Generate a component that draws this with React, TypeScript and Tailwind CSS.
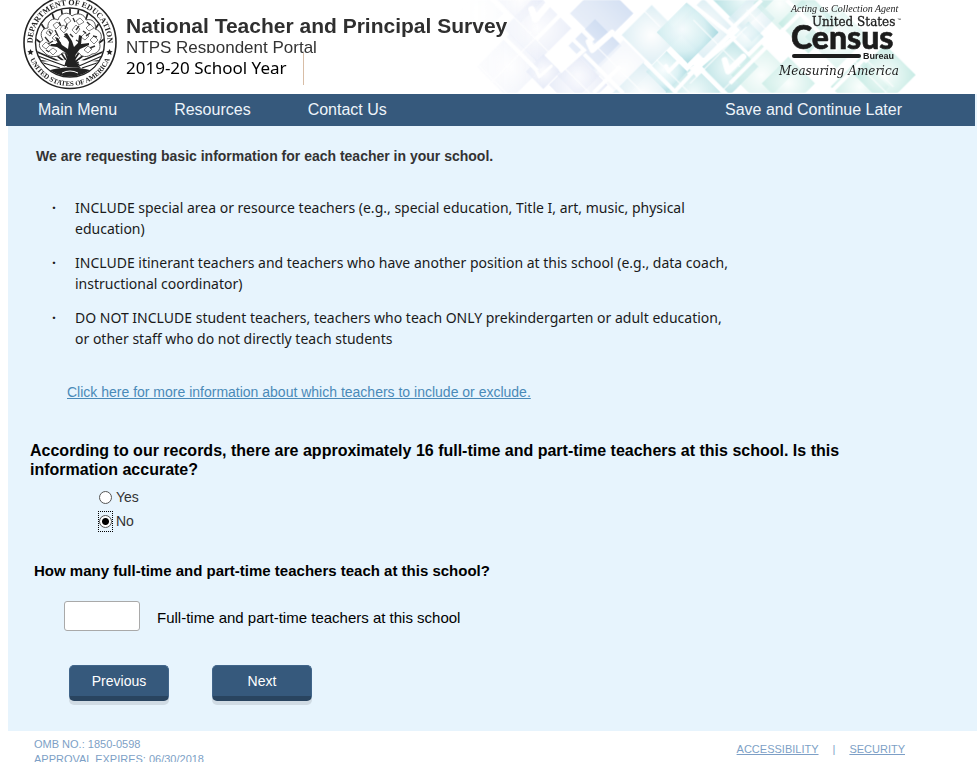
const instructions = [
  "INCLUDE special area or resource teachers (e.g., special education, Title I, art, music, physical education)",
  "INCLUDE itinerant teachers and teachers who have another position at this school (e.g., data coach, instructional coordinator)",
  "DO NOT INCLUDE student teachers, teachers who teach ONLY prekindergarten or adult education, or other staff who do not directly teach students",
];

// centre x, centre y, half diagonal, fill, opacity
const diamonds: [number, number, number, string, number][] = [
  [60, 40, 70, "lavender", 0.4],
  [150, 200, 100, "lavender", 0.7],
  [180, 0, 70, "lavender", 0.8],
  [232, 85, 102, "lavender", 0.8],
  [250, 215, 52, "lavender", 1],
  [355, 255, 88, "lavender", 0.9],
  [425, 40, 95, "blue", 0.9],
  [405, 137, 80, "blue", 0.9],
  [355, 225, 65, "lavender", 0.7],
  [490, 210, 90, "white", 0.8],
  [575, 105, 90, "pale", 0.9],
  [550, 285, 98, "pale", 0.9],
  [730, 85, 90, "pale", 0.9],
  [620, 215, 62, "aqua", 0.9],
  [700, 280, 85, "teal", 0.8],
  [683, 97, 93, "aqua", 1],
  [850, -5, 95, "teal", 1],
  [810, 200, 85, "teal", 0.9],
  [875, 55, 70, "pale", 0.9],
  [865, 110, 46, "aqua", 0.6],
  [905, 225, 92, "mint", 0.6],
  [960, 10, 80, "mint", 0.6],
  [1045, 70, 90, "mint", 0.8],
  [985, 250, 80, "mint", 0.7],
  [1130, 110, 95, "mint", 0.5],
  [1200, 260, 88, "mint", 0.8],
  [1275, 225, 92, "mint", 0.9],
];

const checks = [
  { d: "M215 28 L226 58 L272 4", width: 20 },
  { d: "M386 125 L397 150 L456 98", width: 18 },
  { d: "M230 214 L238 230 L274 198", width: 9 },
  { d: "M618 198 L626 214 L662 178", width: 12 },
  { d: "M794 180 L804 214 L850 170", width: 18 },
];

function HeaderArt() {
  return (
    <svg
      viewBox="0 0 1380 279"
      className="absolute top-0 right-[57px] h-[93px] w-[460px]"
      aria-hidden="true"
    >
      <defs>
        <radialGradient id="white">
          <stop offset="0" stopColor="#ffffff" />
          <stop offset="1" stopColor="#f1f5fb" />
        </radialGradient>
        <radialGradient id="lavender">
          <stop offset="0" stopColor="#fdfdff" />
          <stop offset="1" stopColor="#e4e9f7" />
        </radialGradient>
        <linearGradient id="blue" x1="0" y1="1" x2="1" y2="0">
          <stop offset="0" stopColor="#eaf0fa" />
          <stop offset="0.5" stopColor="#dbe5f5" />
          <stop offset="1" stopColor="#bfd2ee" />
        </linearGradient>
        <radialGradient id="pale" r="0.6">
          <stop offset="0" stopColor="#ffffff" />
          <stop offset="1" stopColor="#cfe8f0" />
        </radialGradient>
        <radialGradient id="aqua" cx="0.42" cy="0.45" r="0.6">
          <stop offset="0" stopColor="#f8fdfe" />
          <stop offset="0.6" stopColor="#d5eff2" />
          <stop offset="1" stopColor="#9fd5dd" />
        </radialGradient>
        <radialGradient id="teal" cx="0.5" cy="0.5" r="0.6">
          <stop offset="0" stopColor="#eefafa" />
          <stop offset="1" stopColor="#a3d9dc" />
        </radialGradient>
        <radialGradient id="mint" r="0.6">
          <stop offset="0" stopColor="#fafffd" />
          <stop offset="1" stopColor="#aee2d9" />
        </radialGradient>
        <linearGradient id="fade">
          <stop offset="0" stopColor="#000" />
          <stop offset="0.18" stopColor="#fff" />
        </linearGradient>
        <mask id="edge">
          <rect width="1380" height="279" fill="url(#fade)" />
        </mask>
      </defs>
      <g mask="url(#edge)">
        {diamonds.map(([x, y, r, fill, opacity], i) => (
          <path
            key={i}
            d={`M${x} ${y - r} L${x + r} ${y} L${x} ${y + r} L${x - r} ${y} Z`}
            fill={`url(#${fill})`}
            opacity={opacity * 0.9}
          />
        ))}
        <g stroke="#fff" fill="none">
          <path
            d="M120 100 L232 212 M228 118 L330 15 M372 162 L490 280 M300 215 L372 150 L325 105 M340 62 L400 122 M465 110 L575 0 M400 279 L480 199 M680 0 L822 112 L685 225 M555 185 L650 280 M640 279 L700 215 M810 250 L1035 25 M905 0 L800 100 M980 0 L1130 150 M1110 279 L1220 169"
            strokeWidth="12"
          />
          <path
            d="M690 205 l22 -14 l20 18 l-22 20 Z"
            strokeWidth="4"
            fill="#fff"
          />
          <path
            d="M0 140 L140 280 M110 0 L390 280 M60 280 L340 0 M330 60 L560 290 M520 0 L600 80 M590 180 L690 280 M700 60 L840 200 M690 250 L860 80 M780 279 L960 99 M860 30 L1110 280 M1000 180 L1180 0 M1060 20 L1300 260 M1180 180 L1280 279"
            strokeWidth="4"
            strokeOpacity="0.7"
          />
          {checks.map(({ d, width }) => (
            <path
              key={d}
              d={d}
              strokeWidth={width}
              strokeLinecap="round"
              strokeLinejoin="round"
            />
          ))}
        </g>
      </g>
    </svg>
  );
}

function Seal() {
  return (
    <svg
      viewBox="0 0 96 90"
      className="h-[90px] w-24 shrink-0"
      role="img"
      aria-label="Department of Education, United States of America"
    >
      <defs>
        <path id="arcTop" d="M12 53 A37.500 37.500 0 1 1 84 53" />
        <path id="arcBottom" d="M7 56 A43 43 0 0 0 89 56" />
        <clipPath id="disc">
          <circle cx="48" cy="42.500" r="34" />
        </clipPath>
      </defs>
      <circle cx="48" cy="42.500" r="46" fill="#fff" stroke="#222" strokeWidth="1.600" />
      <circle cx="48" cy="42.500" r="34.500" fill="#fff" stroke="#222" strokeWidth="1.400" />
      <g clipPath="url(#disc)">
        {/* sun rays behind the tree */}
        <path
          d="M48 66 L4 58 M48 66 L6 48 M48 66 L10 36 M48 66 L18 22 M48 66 L27 4 M48 66 L38 0 M48 66 L48 0 M48 66 L58 0 M48 66 L69 4 M48 66 L78 22 M48 66 L86 36 M48 66 L90 48 M48 66 L92 58"
          stroke="#222"
          strokeWidth="1.700"
        />
        <path
          d="M22 52 C16 48 16 42 21 40 C17 34 20 28 26 28 C25 21 31 17 36 20 C38 13 46 11 50 16 C55 12 63 14 64 20 C70 18 75 23 73 29 C80 31 81 38 77 42 C80 48 76 54 70 54 C65 58 59 57 57 53 L40 53 C37 58 26 58 22 52 Z"
          fill="#fff"
          stroke="#555"
          strokeWidth="1"
        />
        {/* leaves */}
        <path
          d="M24 33 l3 -4 l4 2 l-3 5 Z M31 25 l4 -3 l3 3 l-4 4 Z M42 20 l4 -3 l3 4 l-4 3 Z M54 21 l4 -3 l4 4 l-5 3 Z M64 28 l4 -4 l4 4 l-5 3 Z M20 46 l4 -4 l4 3 l-4 4 Z M30 38 l4 -4 l4 4 l-4 3 Z M38 29 l3 -4 l5 3 l-4 5 Z M50 30 l4 -5 l4 4 l-4 5 Z M59 37 l4 -4 l4 3 l-4 4 Z M68 40 l4 -4 l4 4 l-4 4 Z M62 50 l4 -4 l4 3 l-4 4 Z M27 51 l4 -3 l4 3 l-4 4 Z"
          fill="#fff"
          stroke="#666"
          strokeWidth="0.800"
        />
        <path
          d="M23 37 l4 5 M33 30 l3 6 M45 24 l-2 5 M57 26 l-3 4 M68 33 l-4 3 M73 46 l-5 2 M24 50 l3 2 M39 43 l-5 1 M54 40 l5 3 M37 22 l2 4 M61 31 l3 2 M26 44 l5 -3 M48 34 l3 3 M71 36 l4 1 M27 31 l2 3 M65 22 l3 3 M51 18 l2 4 M42 36 l3 2"
          stroke="#333"
          strokeWidth="1.400"
        />
        {/* trunk and branches */}
        <path
          d="M45 67 C47 60 48 57 44 53 L35 47 L28 46 L29 44 L36 44 L33 37 L36 38 L40 45 L46 49 L47 42 L42 34 L45 33 L50 41 L52 47 L56 43 L57 35 L60 36 L59 44 L67 43 L67 45 L58 49 L54 54 C52 59 54 63 59 68 Z"
          fill="#222"
        />
        <path d="M14 62 L44 60 L42 67 L20 72 Z M82 62 L56 60 L58 67 L76 72 Z" fill="#fff" />
        <path
          d="M16 56 L43 66 M18 62 L38 68 M80 56 L57 66 M78 62 L60 68"
          stroke="#222"
          strokeWidth="1.200"
        />
        <path d="M24 72 C34 66 62 66 72 72 L58 78 L38 78 Z" fill="#222" />
        <path d="M40 73 q8 -4 16 0" stroke="#fff" strokeWidth="1" fill="none" />
      </g>
      <path
        d="M8.500 49 l1 2 l2.200 .2 l-1.700 1.500 l.5 2.200 l-2 -1.200 l-2 1.200 l.5 -2.200 l-1.700 -1.500 l2.200 -.2 Z M87.500 49 l1 2 l2.200 .2 l-1.700 1.500 l.5 2.200 l-2 -1.200 l-2 1.200 l.5 -2.200 l-1.700 -1.500 l2.200 -.2 Z"
        fill="#222"
      />
      <text className="font-['Liberation_Serif',serif] text-[8px] font-bold" fill="#222">
        <textPath href="#arcTop" startOffset="50%" textAnchor="middle">
          DEPARTMENT OF EDUCATION
        </textPath>
      </text>
      <text className="font-['Liberation_Serif',serif] text-[7px] font-bold" fill="#222">
        <textPath href="#arcBottom" startOffset="50%" textAnchor="middle">
          UNITED STATES OF AMERICA
        </textPath>
      </text>
    </svg>
  );
}

function CensusLogo() {
  return (
    <svg viewBox="0 0 130 80" className="h-20 w-[130px] shrink-0" fill="#1c1c1c">
      <text x="14" y="12" className="font-['Liberation_Serif',serif] text-[10px] italic">
        Acting as Collection Agent
      </text>
      <text
        x="35"
        y="26"
        className="font-['DejaVu_Serif',serif] text-[12px]"
        stroke="#1c1c1c"
        strokeWidth="0.300"
      >
        United States
      </text>
      <text x="120" y="21" className="font-['Liberation_Sans',sans-serif] text-[4px]">
        ™
      </text>
      <text
        x="14"
        y="49"
        className="font-['Lato',sans-serif] text-[32px] font-black"
        stroke="#1c1c1c"
        strokeWidth="0.600"
      >
        Census
      </text>
      <rect x="15" y="54" width="69" height="4" rx="2" />
      <text x="86" y="59" className="font-['Liberation_Sans',sans-serif] text-[9px] font-bold">
        Bureau
      </text>
      <text x="2" y="75" className="font-['DejaVu_Serif',serif] text-[12px] italic">
        Measuring America
      </text>
    </svg>
  );
}

function NavLink({ children }: { children: React.ReactNode }) {
  return (
    <a href="#" className="text-base leading-8 text-[#eef4fa]">
      {children}
    </a>
  );
}

function NavButton({ children }: { children: React.ReactNode }) {
  return (
    <button
      type="button"
      className="h-9 w-[100px] rounded-[5px] border border-[#41658a] border-b-[5px] border-b-[#29445f] bg-[#36597c] text-sm text-white shadow-[0_4px_0_#d0dbe4]"
    >
      {children}
    </button>
  );
}

export default function App() {
  return (
    <div className="h-screen overflow-hidden bg-white font-['Liberation_Sans',Arial,sans-serif] text-[#333]">
      <header className="relative flex h-[94px] overflow-hidden pr-[70px] pl-[22px]">
        <HeaderArt />
        <div className="relative flex w-full items-start">
          <Seal />
          <div className="ml-2 pt-3">
            <h1 className="text-[21px] leading-7 font-bold text-[#2f2f2f]">
              National Teacher and Principal Survey
            </h1>
            <p className="h-[13px] overflow-hidden text-[17px] leading-4">NTPS Respondent Portal</p>
            <p className="w-[178px] border-r border-[#d8bda6] pt-0.5 pb-1 font-['Noto_Sans',sans-serif] text-[17px] leading-[26px] text-black">
              2019-20 School Year
            </p>
          </div>
          <div className="ml-auto">
            <CensusLogo />
          </div>
        </div>
      </header>

      <nav className="ml-1.5 flex h-8 border-r-2 border-[#e7f4fd] bg-[#36597c] pr-[73px] pl-8">
        <div className="flex gap-[57px]">
          <NavLink>Main Menu</NavLink>
          <NavLink>Resources</NavLink>
          <NavLink>Contact Us</NavLink>
        </div>
        <div className="ml-auto">
          <NavLink>Save and Continue Later</NavLink>
        </div>
      </nav>

      <main className="ml-2 bg-[#e7f4fd] pt-5 pb-[30px]">
        <p className="ml-7 text-sm leading-5 font-bold">
          We are requesting basic information for each teacher in your school.
        </p>
        <ul className="mt-[31px] ml-11 max-w-[680px] space-y-[13px] font-['Noto_Sans',sans-serif] text-sm text-[#1a1a1a]">
          {instructions.map((text) => (
            <li key={text} className="flex leading-[21px]">
              <span className="w-[23px] shrink-0 font-bold">·</span>
              {text}
            </li>
          ))}
        </ul>
        <a href="#" className="mt-[33px] ml-[59px] block w-fit text-sm leading-5 text-[#4a8ab8] underline">
          Click here for more information about which teachers to include or exclude.
        </a>

        <form className="mt-[39px]">
          <fieldset>
            <legend className="ml-[22px] max-w-[820px] text-base leading-[19px] font-bold text-black">
              According to our records, there are approximately 16 full-time and part-time teachers at
              this school. Is this information accurate?
            </legend>
            <div className="mt-2 ml-[91px] flex flex-col gap-1 text-sm leading-5">
              <label className="flex items-center gap-1">
                <input
                  type="radio"
                  name="accurate"
                  className="size-[13px] appearance-none rounded-full border border-[#555] bg-white"
                />
                Yes
              </label>
              <label className="flex items-center gap-1">
                <span className="-m-px flex h-[21px] items-center border border-dotted border-black">
                  <input
                    type="radio"
                    name="accurate"
                    defaultChecked
                    className="size-[13px] appearance-none rounded-full border border-[#555] bg-white bg-[radial-gradient(circle,#000_3px,transparent_4px)]"
                  />
                </span>
                No
              </label>
            </div>
          </fieldset>

          <p className="mt-[30px] ml-[26px] text-[15px] leading-5 font-bold text-black">
            How many full-time and part-time teachers teach at this school?
          </p>
          <div className="mt-5 ml-14 flex items-center gap-[17px]">
            <input
              id="teacherCount"
              type="text"
              className="h-[30px] w-[76px] rounded-[3px] border border-[#a9a9a9] bg-white px-2 text-sm"
            />
            <label htmlFor="teacherCount" className="pt-1 text-[15px] leading-5 text-black">
              Full-time and part-time teachers at this school
            </label>
          </div>
          <div className="mt-[34px] ml-[61px] flex gap-[43px]">
            <NavButton>Previous</NavButton>
            <NavButton>Next</NavButton>
          </div>
        </form>
      </main>

      <footer className="flex justify-between pt-1.5 pr-[72px] pl-[34px] text-[11px] leading-[15px] text-[#7d9fc6]">
        <p>
          OMB NO.: 1850-0598
          <br />
          APPROVAL EXPIRES: 06/30/2018
        </p>
        <p className="flex gap-3.5 pt-[5px]">
          <a href="#" className="underline">
            ACCESSIBILITY
          </a>
          <span>|</span>
          <a href="#" className="underline">
            SECURITY
          </a>
        </p>
      </footer>
    </div>
  );
}
